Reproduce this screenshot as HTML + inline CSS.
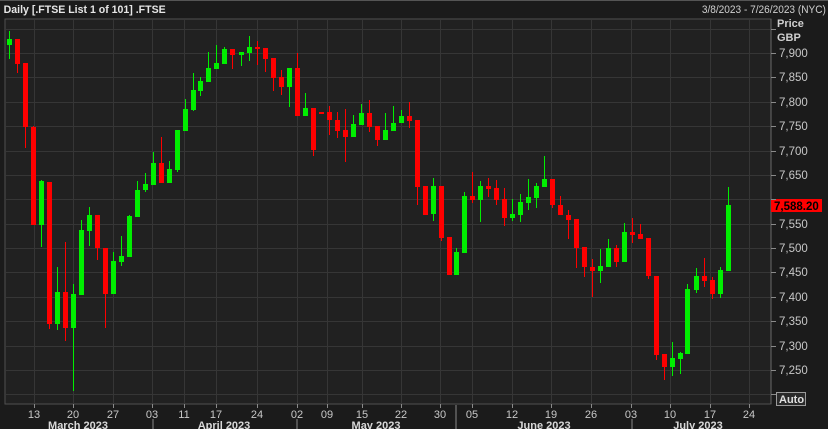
<!DOCTYPE html>
<html><head><meta charset="utf-8"><style>
html,body{margin:0;padding:0;background:#1b1b1b;width:828px;height:429px;overflow:hidden;font-family:"Liberation Sans",sans-serif}
svg{position:absolute;left:0;top:0}
text{font-family:"Liberation Sans",sans-serif}
</style></head><body>
<svg width="828" height="429" viewBox="0 0 828 429" xmlns="http://www.w3.org/2000/svg">
<rect x="0" y="0" width="828" height="429" fill="#1b1b1b"/>
<rect x="0" y="0" width="828" height="1" fill="#555"/>
<text x="4" y="13" fill="#e6e6e6" font-size="11.5" font-weight="bold" transform="scale(0.92,1)">Daily [.FTSE List 1 of 101] .FTSE</text>
<text x="826" y="13" fill="#cfcfcf" font-size="11" text-anchor="end" transform="translate(66,0) scale(0.92,1)">3/8/2023 - 7/26/2023 (NYC)</text>
<rect x="5" y="19" width="766" height="385" fill="#212121" stroke="#505050" stroke-width="1"/>
<g id="grid" stroke="#363636" stroke-width="1"></g>
<g id="candles"></g>
<line x1="771" y1="19" x2="771" y2="404" stroke="#6a6a6a"/>
<g fill="#cfcfcf" font-size="11" font-weight="bold">
<text x="777" y="27">Price</text>
<text x="777" y="41">GBP</text>
</g>
<g fill="#c8c8c8" font-size="11.5" id="plabels">
<text x="779" y="57">7,900</text>
<text x="779" y="81">7,850</text>
<text x="779" y="106">7,800</text>
<text x="779" y="130">7,750</text>
<text x="779" y="155">7,700</text>
<text x="779" y="179">7,650</text>
<text x="779" y="228">7,550</text>
<text x="779" y="252">7,500</text>
<text x="779" y="276">7,450</text>
<text x="779" y="301">7,400</text>
<text x="779" y="325">7,350</text>
<text x="779" y="350">7,300</text>
<text x="779" y="374">7,250</text>
</g>
<rect x="771" y="199" width="51" height="13" fill="#ff0000"/>
<text x="774" y="210" fill="#000" font-size="11.5" font-weight="bold">7,588.20</text>
<rect x="776.5" y="392.5" width="29" height="13" fill="#2a2a2a" stroke="#9a9a9a"/>
<text x="779" y="403" fill="#e0e0e0" font-size="11" font-weight="bold">Auto</text>
<g fill="#c8c8c8" font-size="11" text-anchor="middle" id="days">
<text x="34" y="418">13</text><text x="73" y="418">20</text><text x="113" y="418">27</text>
<text x="152" y="418">03</text><text x="184" y="418">11</text><text x="216" y="418">17</text>
<text x="257" y="418">24</text><text x="297" y="418">02</text><text x="327" y="418">09</text>
<text x="362" y="418">15</text><text x="401" y="418">22</text><text x="440" y="418">30</text>
<text x="472" y="418">05</text><text x="512" y="418">12</text><text x="551" y="418">19</text>
<text x="591" y="418">26</text><text x="631" y="418">03</text><text x="670" y="418">10</text>
<text x="710" y="418">17</text><text x="749" y="418">24</text>
</g>
<g fill="#d8d8d8" font-size="11" font-weight="bold" text-anchor="middle">
<text x="78" y="429">March 2023</text><text x="224" y="429">April 2023</text>
<text x="376" y="429">May 2023</text><text x="544" y="429">June 2023</text>
<text x="698" y="429">July 2023</text>
</g>
<g stroke="#888" id="sep">
<line x1="153" y1="419" x2="153" y2="429"/><line x1="297" y1="419" x2="297" y2="429"/>
<line x1="456" y1="405" x2="456" y2="429"/><line x1="632" y1="419" x2="632" y2="429"/>
</g>
</svg>
<script>
var NS="http://www.w3.org/2000/svg";
function el(p,t,a){var e=document.createElementNS(NS,t);for(var k in a)e.setAttribute(k,a[k]);p.appendChild(e);return e;}
var grid=document.getElementById('grid');
for(var i=-1;i<=14;i++){var y=Math.round(53+i*24.38)+0.5;if(y>19&&y<404)el(grid,'line',{x1:6,y1:y,x2:770,y2:y});
 el(document.querySelector('svg'),'line',{x1:771,y1:y,x2:776,y2:y,stroke:'#8a8a8a'});}
var vx=[34,73,113,152,184,216,257,297,327,362,401,440,472,512,551,591,631,670,710,749];
vx.forEach(function(x){el(grid,'line',{x1:x+0.5,y1:20,x2:x+0.5,y2:403});el(document.querySelector('svg'),'line',{x1:x+0.5,y1:404,x2:x+0.5,y2:408,stroke:'#8a8a8a'});});
var d=[
[9,39,45,31,59,'g'],[17,39,64,39,73,'r'],[25,63,127,63,148,'r'],[33,127,225,126,225,'r'],[41,181,225,180,247,'g'],
[49,182,324,182,329,'r'],[57,292,324,267,330,'g'],[65,292,328,242,341,'r'],[73,294,328,284,391,'g'],[81,230,295,220,295,'g'],
[89,215,231,207,246,'g'],[97,215,248,215,260,'r'],[105,248,294,248,328,'r'],[113,261,294,252,294,'g'],[121,256,262,236,266,'g'],
[129,216,257,215,257,'g'],[137,190,217,181,217,'g'],[145,184,190,173,192,'g'],[153,163,185,152,185,'g'],[161,163,183,137,183,'r'],
[169,169,183,161,183,'g'],[177,130,170,130,172,'g'],[185,109,131,99,131,'g'],[193,90,110,73,111,'g'],[200,81,91,77,96,'g'],
[208,68,82,52,82,'g'],[216,63,69,45,69,'g'],[224,49,64,47,64,'g'],[232,49,55,49,69,'r'],[241,52,55,52,66,'g'],
[249,47,53,36,61,'g'],[257,47,49,41,65,'r'],[265,48,59,48,72,'r'],[273,58,78,58,91,'r'],[281,77,87,70,95,'r'],
[289,68,87,68,107,'g'],[297,68,116,53,116,'r'],[305,108,116,93,116,'g'],[313,108,150,108,156,'r'],[321,112,113,112,113,'r'],
[329,112,120,106,135,'r'],[337,120,131,112,138,'r'],[345,130,137,109,162,'r'],[353,124,137,115,137,'g'],[361,113,125,104,125,'g'],
[369,113,127,100,132,'r'],[377,126,140,126,146,'r'],[385,130,140,113,140,'g'],[393,123,131,106,131,'g'],[401,116,123,110,123,'g'],
[409,116,121,102,128,'r'],[417,120,187,120,205,'r'],[425,186,215,186,215,'r'],[433,186,214,178,221,'g'],[441,186,238,186,241,'r'],
[449,237,275,237,275,'r'],[456,252,275,248,275,'g'],[464,196,253,192,253,'g'],[472,196,200,172,203,'r'],[480,186,200,181,222,'g'],
[488,186,189,178,197,'r'],[496,188,200,180,205,'r'],[504,199,218,188,226,'r'],[512,214,218,199,221,'g'],[520,202,215,194,222,'g'],
[528,197,203,179,210,'g'],[536,186,198,183,208,'g'],[544,179,187,156,187,'g'],[552,179,205,179,208,'r'],[560,205,215,196,215,'r'],
[568,215,220,210,239,'r'],[576,219,248,219,268,'r'],[584,247,267,247,277,'r'],[592,267,271,259,297,'r'],[600,266,271,249,283,'g'],
[608,248,267,239,267,'g'],[616,248,262,245,267,'r'],[624,232,262,223,262,'g'],[632,232,235,218,243,'r'],[640,234,239,224,239,'r'],
[648,238,276,238,279,'r'],[656,276,355,276,360,'r'],[664,354,367,354,380,'r'],[672,358,367,342,376,'g'],[680,353,359,352,374,'g'],
[687,289,354,284,354,'g'],[696,276,290,268,293,'g'],[704,276,281,258,287,'r'],[712,280,294,277,299,'r'],[720,270,294,267,298,'g'],
[728,205,271,187,271,'g']];
var cg=document.getElementById('candles');
d.forEach(function(c){var col=c[5]=='g'?'#00ee00':'#ff0000';
 el(cg,'rect',{x:c[0],y:c[3],width:1,height:Math.max(1,c[4]-c[3]),fill:col});
 el(cg,'rect',{x:c[0]-2,y:c[1],width:5,height:Math.max(2,c[2]-c[1]),fill:col});});
</script>
</body></html>
